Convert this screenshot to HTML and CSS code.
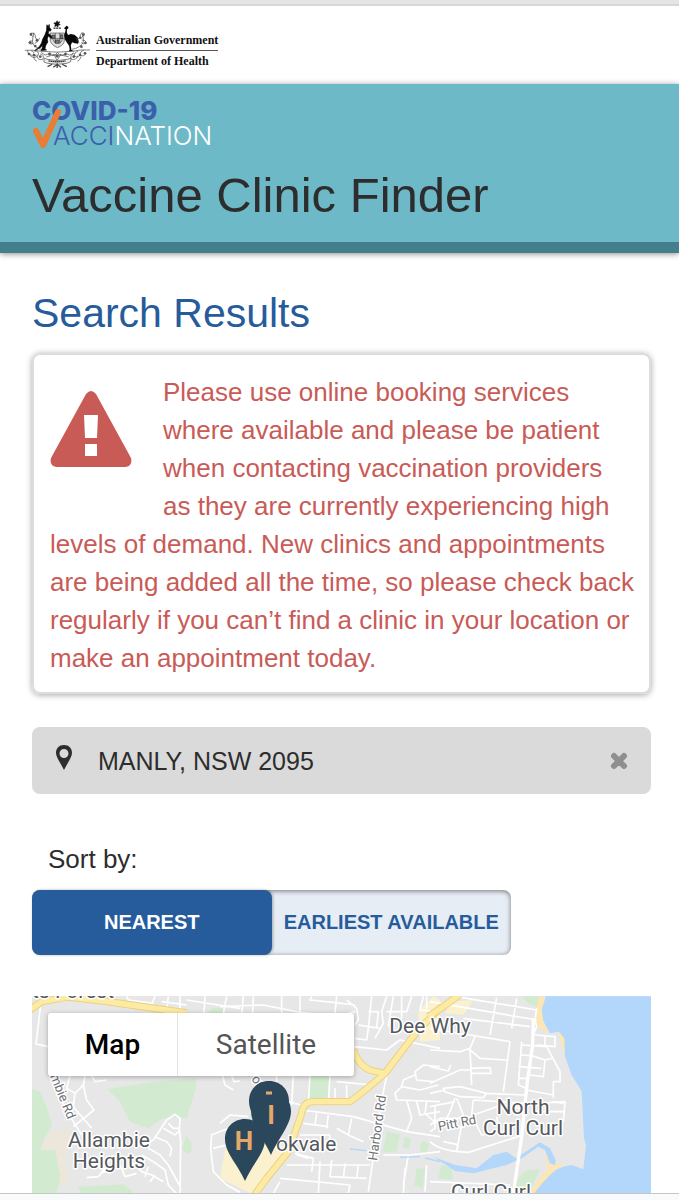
FILE: index.html
```html
<!DOCTYPE html>
<html lang="en">
<head>
<meta charset="utf-8">
<meta name="viewport" content="width=device-width, initial-scale=1">
<title>Vaccine Clinic Finder</title>
<link rel="stylesheet" href="styles.css">
</head>
<body>
<div class="page">
  <div class="top-strip"></div>
  <header class="gov">
    <svg class="crest" viewBox="70 60 202 150" aria-hidden="true">
      <path d="M170 62l2 5 6-2-3 5 4 4-6 1-1 6-4-4-5 2 1-6-4-4 6-1z" fill="#111" stroke="#111" stroke-width="2"/>
      <path d="M159 84h22" stroke="#222" stroke-width="4" stroke-dasharray="6 2"/>
      <path d="M149 99h43v22q-2 15-21 22-18-7-22-22z" fill="#ddd" stroke="#444" stroke-width="2"/>
      <path d="M154 105h9v10h-9zM180 104h7v12h-7zM165 120h11v10h-11zM157 118l8 12M186 119l-9 12M164 99v30M178 99v30M150 116h41" fill="#777" stroke="#333" stroke-width="2"/>
      <path d="M139 74l4 5 3-6 1 9 5 7-2 4-5-1-2 8 9 7 3 6-4 1-8-6-3 9 2 9-6 9-3 11 5 4-17 2 4-8 1-8-8 8-16 8 14-12 7-11 3-11 7-13 5-14z" fill="#080808" stroke="#080808" stroke-width="2"/>
      <path d="M194 81l5-4 5 4-1 5-3 1-1 10 4 8 8-3 11 2 9 8 4 12-2 7-10-1-8-3-4 9 2 14 8 4h-18l5-4-2-13-6-8-6-10-3-12 5-19-5-3z" fill="#080808"/>
      <g fill="none" stroke="#444" stroke-width="2">
        <path d="M73 151q25-2 49 3 48 5 94 0 25-6 53-4"/>
        <path d="M122 148q-17-3-27-19 1-18 5-31M96 123q-11-3-12 6 8 7 15 0M98 111q-9-6-6-12 11-1 12 7-3 9 8 13M102 130q11-3 15-16M215 148q24-4 34-22 1-17-4-28M244 120q12-1 14 8-8 7-15 0M245 111q9-5 6-12-9-3-11 6 2 8-8 12M237 128q-8-5-11-14M80 151q3 16 18 15 5-12-6-13M87 165q14 15 26 1 3-14-11-12M109 164q-1 17 17 15 7-15-7-17M233 155q-12 1-11 14 15 7 16-7M250 151q-12 3-10 15 12 5 16-6M222 160q-15 5-9 18 16 3 19-11M122 156q12 17 25 2 13 15 24 0 13 15 25 0 12 14 23 0M98 170q3 11 11 14M242 170q-3 11-11 14M159 163l11 18 12-19M137 171q32-12 68 0"/>
        <path d="M131 174l8 4q31 8 63 0l9-4v11l-11 5q-31 7-60 0l-10-4z" fill="#eee"/>
        <path d="M144 183q26 5 51 0" stroke="#111" stroke-width="4" stroke-dasharray="4 2"/>
        <path d="M170 190v14M170 194l-12 8M170 194l12 8M155 193l-14 7M185 193l14 7" stroke-width="4"/>
      </g>
      <g fill="#555">
        <circle cx="91" cy="103" r="4"/><circle cx="89" cy="128" r="4"/><circle cx="109" cy="121" r="4"/><circle cx="104" cy="138" r="4"/><circle cx="249" cy="104" r="4"/><circle cx="255" cy="129" r="4"/><circle cx="240" cy="113" r="4"/><circle cx="243" cy="140" r="4"/><circle cx="85" cy="162" r="4"/><circle cx="101" cy="166" r="4"/><circle cx="119" cy="170" r="4"/><circle cx="147" cy="163" r="4"/><circle cx="170" cy="168" r="5"/><circle cx="195" cy="163" r="4"/><circle cx="220" cy="170" r="4"/><circle cx="239" cy="165" r="4"/><circle cx="254" cy="160" r="4"/>
      </g>
    </svg>
    <div class="gov-text">
      <span class="gov-name">Australian Government</span>
      <span class="gov-dept">Department of Health</span>
    </div>
  </header>

  <div class="banner">
    <svg class="campaign" viewBox="0 0 184 50" role="img" aria-label="COVID-19 Vaccination">
      <text class="campaign-covid" x="0" y="20">COVID-19</text>
      <text class="campaign-light" x="21" y="45"><tspan class="campaign-blue">ACCI</tspan><tspan class="campaign-white">NATION</tspan></text>
      <path d="M4 31L11 45 26 12" fill="none" stroke="#ec7b34" stroke-width="6" stroke-linecap="round" stroke-linejoin="round"/>
    </svg>
    <h1>Vaccine Clinic Finder</h1>
  </div>

  <main class="content">
    <h2>Search Results</h2>

    <section class="notice" role="alert">
      <svg class="notice-icon" viewBox="0 0 82 76" aria-hidden="true">
        <path d="M36 3Q41-3 46 3L81 67Q83 75 75 76H7Q-1 75 1 67Z" fill="#c95b57"/>
        <path d="M34 24H48L47 47H35ZM35 53H47V65H35Z" fill="#fff"/>
      </svg>
      <p>Please use online booking services where available and please be patient when contacting vaccination providers as&nbsp;they are currently experiencing high levels of demand. New clinics and appointments are being added all the time, so please check back regularly if you can’t find a clinic in your location or make an appointment today.</p>
    </section>

    <form class="search">
      <svg class="search-pin" viewBox="0 0 16 25" aria-hidden="true">
        <path d="M8 0C3 0 0 3.500 0 8c0 4 4 9 8 17 4-8 8-13 8-17 0-4.500-3-8-8-8zm0 4a4.500 4.500 0 110 9 4.500 4.500 0 010-9z" fill="#2d2d2d" fill-rule="evenodd"/>
      </svg>
      <input class="search-input" type="text" value="MANLY, NSW 2095" aria-label="Location">
      <button class="search-clear" type="button" aria-label="Clear location">
        <svg class="clear-icon" viewBox="0 0 18 18" aria-hidden="true"><path d="M4 4L14 14M14 4L4 14" stroke="#8f8f8f" stroke-width="6" stroke-linecap="round"/></svg>
      </button>
    </form>

    <div class="sort-label" id="sort-label">Sort by:</div>
    <div class="sort" role="group" aria-labelledby="sort-label">
      <button class="sort-option sort-active" type="button" aria-pressed="true">NEAREST</button>
      <button class="sort-option" type="button" aria-pressed="false">EARLIEST AVAILABLE</button>
    </div>

    <section class="map" aria-label="Clinic map">
      <svg class="map-canvas" viewBox="0 0 619 197" preserveAspectRatio="xMinYMin slice">
        <g transform="scale(.33333)">
          <g transform="translate(-36 -33)">
            <g class="park">
              <path d="M262 312L340 300 400 290 528 280V310L500 400 470 395 430 400 385 430 330 410 300 350Z"/>
              <path d="M36 312L60 320 80 365 96 420 75 455 60 495H105L122 570 110 626H36Z"/>
              <path d="M175 605L310 598 345 626H182Z"/>
              <path d="M500 453L515 475 514 500 500 508 486 488Z"/>
              <path d="M575 70L610 68V84H565Z"/>
            </g>
            <path class="sand" d="M95 440L145 430 150 460 135 520 150 590 120 600 105 495H62Z" opacity=".25"/>
            <g class="road">
              <path d="M62 60L48 177 85 185M130 36V50M320 34L325 45 400 55M245 34V45M405 34L395 60M445 34L440 75M480 34V75M555 34L552 84M620 34L610 84M500 45L660 70M425 50L500 60"/>
              <path d="M95 270L120 340 160 410 185 450M150 272L140 310 165 325 190 300 195 272M165 325L160 365 215 430M190 300L200 345 222 375 160 425M215 272L225 290 260 285M130 300L110 310"/>
              <path d="M400 465L440 405 465 388 480 400 478 430 482 470 480 626M400 465L365 485M385 490L420 510 445 540 478 600M405 455L440 470 455 490 450 515M430 430L465 450 480 435M445 415L460 430 478 430M365 510L400 530 435 555 445 600 470 626M335 530L365 560 395 570 430 590M300 540L315 575 350 565M255 550L235 575 200 578M270 520L250 565M385 545L375 575M405 570L390 590"/>
              <path d="M660 440L625 430 575 450 572 490 580 560 620 600 660 622M580 490L620 480 625 500M608 272L615 300 640 315M635 272L642 290 660 288"/>
            </g>
            <path class="highway-edge" d="M30 75L65 50 145 36 250 48 500 84"/>
            <path class="highway" d="M30 75L65 50 145 36 250 48 500 84"/>
          </g>
          <g transform="translate(564 -33)">
            <g class="park">
              <path d="M268 272L332 272 328 340H260Z"/>
              <path d="M500 440L540 448 530 500H488Z"/><path d="M555 455L572 460 568 492 548 488Z"/><path d="M605 468L628 475 620 505 600 500Z"/><path d="M590 550L615 552 608 612 582 600Z"/>
            </g>
            <path fill="#fbf1cf" d="M15 495L65 420 200 490 95 626 0 580ZM595 80L640 34 660 45V165L600 170Z"/>
            <g class="road">
              <path d="M0 65L130 60 240 82 350 95 405 80M70 34L65 84M100 34L98 84M185 34V84M240 34V84M275 34L270 45 340 52 405 60M350 34L345 84M380 45L410 70 415 105 405 120M455 34L445 130 440 165 405 160M415 120L480 130M445 80H475L470 130M500 34L485 80 490 115 465 160M520 34L505 125M545 34V100M500 80H560L575 34M610 34L600 75 655 80M620 34V70M402 185L500 195 540 165 660 190"/>
              <path d="M500 272L480 370 470 450 445 620M0 415L30 390 85 395M170 272V300L200 350 245 360M220 272L215 360M245 375L400 395 560 440 660 455M270 272L265 350M330 272L325 350M350 290L455 300M345 310L345 350M380 300V345M250 415L325 425M290 385L285 420M325 390L320 430M240 450L330 450M395 400L385 450 430 470M385 450L350 430M330 450L325 500M225 505L280 520 275 560M265 520L230 510M200 540L450 540M300 530L295 625M335 525L330 575 440 580M375 535L370 580M415 540L410 580M180 580L390 600 385 625M180 590L160 625"/>
              <path d="M660 245L610 240 585 260 590 285 640 290M585 270L550 285 545 305 525 325 530 345 660 350M545 305L600 315 655 300M560 345L575 400 560 440M590 350L600 390 660 380M620 350L615 385 650 415M555 550L550 625M490 510L570 510 660 500M565 510L550 600M620 540L615 620"/>
            </g>
            <g class="stream"><path d="M390 492L440 497M540 517L600 515M615 519L660 530"/></g>
            <path class="highway-edge" d="M100 635L140 580 205 500 245 385Q250 350 280 350L390 350Q420 330 495 265L590 140 670 60M400 195Q420 250 460 258L495 265"/>
            <path class="highway" d="M100 635L140 580 205 500 245 385Q250 350 280 350L390 350Q420 330 495 265L590 140 670 60M400 195Q420 250 460 258L495 265"/>
          </g>
          <g transform="translate(1194 -33)">
            <path class="park" d="M275 34H335L325 65 300 60ZM35 540L65 550 68 585 25 580ZM260 585Q285 545 330 555L300 620 255 615Z"/>
            <path class="water" d="M345 34L335 70 338 105 360 145 385 140 400 160 405 215 425 270 455 318 462 460 468 480 460 553 425 540Q380 545 340 580L305 630H665V34Z"/>
            <path class="sand" d="M325 36H347L335 75 340 110 355 145 330 130 315 110ZM345 500L360 540 408 533Q360 560 310 628L300 622 335 570 352 555ZM385 138L403 160 405 212 398 190Z"/>
            <path class="water" d="M10 515L75 540 140 550 190 510 230 500 258 520 330 472 360 490 377 525 375 540 360 535 345 495 325 485 275 520 230 540 130 565 75 558Z"/>
            <path fill="#fbf1cf" d="M60 50L130 45 100 90 45 85Z"/>
            <g class="road">
              <path d="M0 50L320 105M75 34L320 75M200 38L180 150M260 40L245 130M100 100L300 125M0 130L240 170M320 70L315 105 320 125 310 150M135 155L120 190 125 300M115 190L150 220 230 225M0 195L90 200 120 190M240 170L220 320M125 250L180 248 183 265 125 265M0 245L55 258 62 240M0 295L90 255 125 255M40 310L90 305 170 325 160 338 90 335 45 320ZM0 325L45 315M170 325L285 330"/>
              <path d="M275 170L265 300 290 310M315 150L375 155V185L320 180M345 150V185M350 185L390 260V290H370V340M275 180L350 185M270 210L305 212 345 225 340 275 300 270M345 225L365 220M265 245L335 250M265 280H295M290 315L370 330M320 355L405 350 400 410M130 345L285 355M400 355L370 350M130 390L200 365 285 370M75 340L60 380 50 400M80 340L100 390 80 500M130 345L125 390 155 450 220 440M0 365L75 350M15 365V430L0 440M0 470Q30 500 115 502L280 450M40 470L80 478 85 490M200 395L210 450M340 380H400M0 420L30 400 90 400M0 590L240 600M85 595L80 626"/>
            </g>
            <path class="road road-main" d="M310 100L308 180 292 290 275 455 250 626"/>
            <path class="highway-edge" d="M-5 95L40 65 90 28"/>
            <path class="highway" d="M-5 95L40 65 90 28"/>
          </g>
        </g>
        <g class="place">
          <text x="0" y="2">ts Forest</text>
          <text class="mid" x="77" y="151">Allambie</text>
          <text class="mid" x="77" y="172">Heights</text>
          <text class="mid" x="398" y="37">Dee Why</text>
          <text class="mid" x="491" y="118">North</text>
          <text class="mid" x="491" y="139">Curl Curl</text>
          <text class="mid" x="459" y="203">Curl Curl</text>
          <text x="244" y="155">okvale</text>
        </g>
        <g class="street">
          <text transform="translate(18 80) rotate(68)">mbie Rd</text>
          <text transform="translate(345 165) rotate(-82)">Harbord Rd</text>
          <text transform="translate(407 135) rotate(-11)">Pitt Rd</text>
          <text transform="translate(219 83) rotate(55)">on</text>
        </g>
        <g class="pins">
          <path d="M237 85c-12 0-20 9-20 20 0 14 12 24 20 40 9-16 20-26 20-40 0-11-8-20-20-20z"/>
          <path d="M239 95c-12 0-20 9-20 20 0 14 12 26 20 44 8-18 20-30 20-44 0-11-8-20-20-20z"/>
          <path d="M213 123c-12 0-20 9-20 20 0 14 12 24 20 42 8-18 20-28 20-42 0-11-8-20-20-20z"/>
          <path class="pin-dash" d="M234 97h6"/>
          <text class="mid" x="239" y="128">I</text>
          <text class="mid" x="212" y="154">H</text>
        </g>
      </svg>
      <div class="map-types">
        <button class="map-type map-type-active" type="button">Map</button>
        <button class="map-type map-type-wide" type="button">Satellite</button>
      </div>
    </section>
  </main>
  <div class="bottom-strip"></div>
</div>
</body>
</html>
```
FILE: styles.css
```css
* { box-sizing: border-box; }

body {
  margin: 0;
  background: #fff;
  color: #2d2d2d;
  font-family: "Liberation Sans", Arial, sans-serif;
}

.page {
  display: flex;
  flex-direction: column;
  min-height: 100vh;
}

button { font-family: inherit; cursor: pointer; }

.top-strip {
  height: 6px;
  background: #e5e5e5;
  border-bottom: 2px solid #d8d8d8;
}

.gov {
  display: flex;
  align-items: flex-start;
  gap: 5px;
  height: 78px;
  padding: 14px 24px 0;
}

.crest { width: 67px; height: 50px; }

.gov-text {
  display: flex;
  flex-direction: column;
  padding-top: 12px;
  color: #111;
  font-family: "Liberation Serif", "Times New Roman", serif;
  font-size: 12px;
  font-weight: bold;
  line-height: 16px;
}

.gov-name { padding-bottom: 2px; border-bottom: 1px solid #555; }
.gov-dept { padding-top: 2px; }

.banner {
  padding: 16px 32px 17px;
  background: #6db9c8;
  border-bottom: 11px solid #437e8c;
  box-shadow: 0 1px 6px rgba(0, 0, 0, .45);
}

.campaign { display: block; width: 184px; height: 50px; overflow: visible; }
.campaign-covid { fill: #3c5fab; font: 800 26px Inter, sans-serif; }
.campaign-light { font: 300 26px Inter, sans-serif; }
.campaign-blue { fill: #3c5fab; }
.campaign-white { fill: #fff; }

h1 {
  margin: 15px 0 0;
  font-size: 49px;
  font-weight: 400;
  line-height: 60px;
}

.content {
  display: flex;
  flex: 1;
  flex-direction: column;
  padding: 36px 28px 0 32px;
}

h2 {
  margin: 0 0 16px;
  color: #275c9c;
  font-size: 41px;
  font-weight: 400;
  line-height: 48px;
}

.notice {
  padding: 18px 8px 15px 16px;
  border: 2px solid #dcdcdc;
  border-radius: 8px;
  box-shadow: 0 1px 6px rgba(0, 0, 0, .35);
  color: #c95b57;
  font-size: 26px;
  line-height: 38px;
}

.notice p { margin: 0; }

.notice-icon {
  float: left;
  width: 82px;
  height: 76px;
  margin: 18px 31px 24px 0;
}

.search {
  display: flex;
  align-items: center;
  height: 67px;
  margin-top: 33px;
  padding: 0 23px 0 24px;
  border-radius: 8px;
  background: #dadada;
}

.search-pin { width: 16px; height: 25px; margin-bottom: 6px; }

.search-input {
  flex: 1;
  min-width: 0;
  padding: 2px 0 0 26px;
  border: 0;
  background: none;
  color: #2d2d2d;
  font: 25px "Liberation Sans", Arial, sans-serif;
}

.search-clear { display: flex; padding: 0; border: 0; background: none; }
.clear-icon { width: 18px; height: 18px; }

.sort-label {
  margin: 49px 16px 15px;
  font-size: 26px;
  line-height: 32px;
}

.sort {
  display: grid;
  grid-template-columns: 1fr 1fr;
  width: 479px;
  max-width: 100%;
  height: 65px;
  border-radius: 8px;
  background: #e6edf4;
  box-shadow: inset 0 1px 5px rgba(0, 0, 0, .5);
}

.sort-option {
  padding: 0;
  border: 0;
  border-radius: 8px;
  background: none;
  color: #275c9c;
  font-size: 20px;
  font-weight: bold;
  white-space: nowrap;
}

.sort-active { background: #275c9c; color: #fff; box-shadow: 1px 0 3px rgba(0, 0, 0, .3); }

.map {
  position: relative;
  flex: 1 0 190px;
  margin-top: 41px;
  overflow: hidden;
  background: #e7e7e7;
}

.map-canvas { position: absolute; inset: 0; width: 100%; height: 100%; }

.park { fill: #d2ebd0; }
.water { fill: #b2d7fb; }
.sand { fill: #fbe6b4; }
.road { fill: none; stroke: #fff; stroke-width: 5; stroke-linejoin: round; }
.road-main { stroke-width: 10; }
.stream { stroke: #b2d7fb; stroke-width: 4; fill: none; }
.highway-edge { fill: none; stroke: #ecd182; stroke-width: 22; stroke-linejoin: round; }
.highway { fill: none; stroke: #fdeba4; stroke-width: 16; stroke-linejoin: round; }

.place, .street {
  fill: #55585d;
  stroke: #fff;
  stroke-width: 3px;
  stroke-linejoin: round;
  paint-order: stroke;
  font-family: Roboto, sans-serif;
}

.place { font-size: 21px; }
.street { font-size: 13px; fill: #6f7277; }
.mid { text-anchor: middle; }

.pins { fill: #2b475c; }
.pins text { fill: #e6a869; font: bold 26px Roboto, sans-serif; }
.pin-dash { stroke: #e6a869; stroke-width: 3; }

.map-types {
  position: absolute;
  top: 17px;
  left: 16px;
  display: flex;
  height: 63px;
  border-radius: 3px;
  background: #fff;
  box-shadow: 0 1px 5px rgba(0, 0, 0, .3);
}

.map-type {
  width: 130px;
  padding: 0;
  border: 0;
  background: none;
  color: #555;
  font-family: Roboto, sans-serif;
  font-size: 28px;
}

.map-type-active { border-right: 1px solid #e4e4e4; color: #000; font-weight: 500; }
.map-type-wide { width: 176px; }

.bottom-strip {
  height: 7px;
  border-top: 1px solid #c4c6c8;
  background: #f8fafc;
}
```
